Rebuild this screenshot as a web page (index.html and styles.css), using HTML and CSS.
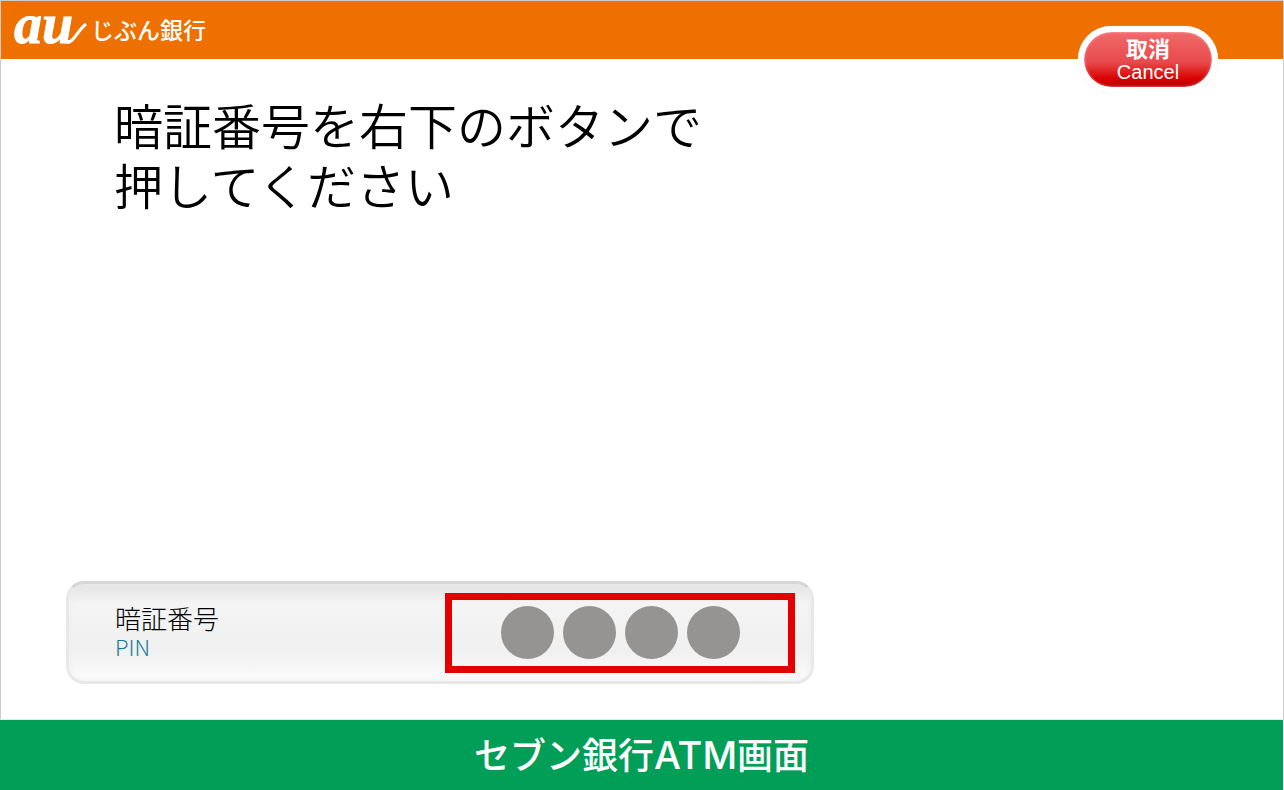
FILE: index.html
```
<!DOCTYPE html>
<html lang="ja">
<head>
    <meta charset="UTF-8">
    <meta name="viewport" content="width=device-width, initial-scale=1.0">
    <title>暗証番号の入力</title>
    <link rel="stylesheet" href="styles.css">
</head>
<body>
    <div class="screen">
        <header class="header">
            <svg class="logo" width="74" height="58" viewBox="0 0 74 58" aria-hidden="true">
                <text class="logo-mark" x="0" y="42">au</text>
                <path d="M48 37 C50 43 56 42 60 37 C64 32 67 27 72 23" fill="none" stroke="#fff" stroke-width="3"/>
            </svg>
            <span class="bank-name">じぶん銀行</span>
            <button class="cancel" type="button">
                <span class="cancel-ja">取消</span>
                <span class="cancel-en">Cancel</span>
            </button>
        </header>
        <main class="content">
            <h1>暗証番号を右下のボタンで<br>押してください</h1>
            <section class="pin-panel">
                <div class="pin-label" id="pin-label">
                    <span class="pin-ja">暗証番号</span>
                    <span class="pin-en">PIN</span>
                </div>
                <div class="pin-dots" role="group" aria-labelledby="pin-label">
                    <span class="dot"></span>
                    <span class="dot"></span>
                    <span class="dot"></span>
                    <span class="dot"></span>
                </div>
            </section>
        </main>
    </div>
    <footer class="caption">セブン銀行<span class="caption-latin">ATM</span>画面</footer>
</body>
</html>
```
FILE: styles.css
```
* {
    box-sizing: border-box;
}

body {
    display: flex;
    flex-direction: column;
    min-height: 100vh;
    margin: 0;
    background: #fff;
    color: #000;
    font-family: "Noto Sans CJK JP", sans-serif;
}

.screen {
    display: flex;
    flex: 1;
    flex-direction: column;
    border: 1px solid #ccc;
    border-bottom-color: #e8e8e8;
}

/* Header */
.header {
    position: relative;
    display: flex;
    align-items: center;
    gap: 3px;
    height: 58px;
    padding-left: 13px;
    background: #ed7000;
    color: #fff;
}

.logo-mark {
    fill: #fff;
    stroke: #fff;
    stroke-width: 1px;
    font-family: "Liberation Serif", serif;
    font-size: 56px;
    font-style: italic;
    font-weight: bold;
}

.bank-name {
    padding-bottom: 3px;
    font-size: 23px;
    font-weight: 500;
    line-height: 32px;
}

.cancel {
    position: absolute;
    top: 25px;
    right: 65px;
    display: flex;
    flex-direction: column;
    align-items: center;
    justify-content: center;
    width: 140px;
    height: 67px;
    padding: 3px 0 0;
    border: 6px solid #fff;
    border-radius: 34px;
    background: linear-gradient(#f16a6b, #e84a4c 55%, #d90000 85%, #b80000) padding-box, #fff;
    box-shadow: inset 0 0 2px 1px rgba(255, 200, 200, 0.4), 0 0 1px #ddd;
    color: #fff;
    font-family: "Liberation Sans", "Noto Sans CJK JP", sans-serif;
    cursor: pointer;
}

.cancel-ja {
    font-size: 22px;
    font-weight: 700;
    line-height: 22px;
}

.cancel-en {
    font-size: 20px;
    line-height: 22px;
}

/* Content */
.content {
    display: flex;
    flex: 1;
    flex-direction: column;
    justify-content: space-between;
    padding: 35px 65px;
}

h1 {
    margin: 0 0 0 48px;
    font-size: 49px;
    font-weight: 350;
    line-height: 60px;
}

.pin-panel {
    display: flex;
    align-items: center;
    justify-content: space-between;
    width: 100%;
    max-width: 748px;
    height: 103px;
    padding: 0 16px 0 46px;
    border: 3px solid #e8e8e8;
    border-top-color: #d6d6d6;
    border-radius: 18px;
    background: linear-gradient(#e2e2e2, #f4f4f4 20%, #f0f0f0 70%, #fcfcfc);
    box-shadow: inset 0 0 6px #eee;
}

.pin-label {
    display: flex;
    flex-direction: column;
    padding-bottom: 5px;
}

.pin-ja {
    font-size: 26px;
    font-weight: 300;
    line-height: 32px;
}

.pin-en {
    color: #147d98;
    font-size: 22px;
    font-weight: 300;
    line-height: 24px;
}

.pin-dots {
    display: flex;
    align-items: center;
    justify-content: center;
    gap: 9px;
    width: 350px;
    height: 80px;
    border: 7px solid #e50000;
}

.dot {
    width: 53px;
    height: 53px;
    border-radius: 50%;
    background: #959492;
}

/* Caption */
.caption {
    height: 70px;
    margin-right: 1px;
    background: #009e57;
    color: #fff;
    font-size: 36px;
    font-weight: 500;
    line-height: 66px;
    text-align: center;
}

.caption-latin {
    font-family: Inter, sans-serif;
    font-size: 38px;
    line-height: 1;
}
```
